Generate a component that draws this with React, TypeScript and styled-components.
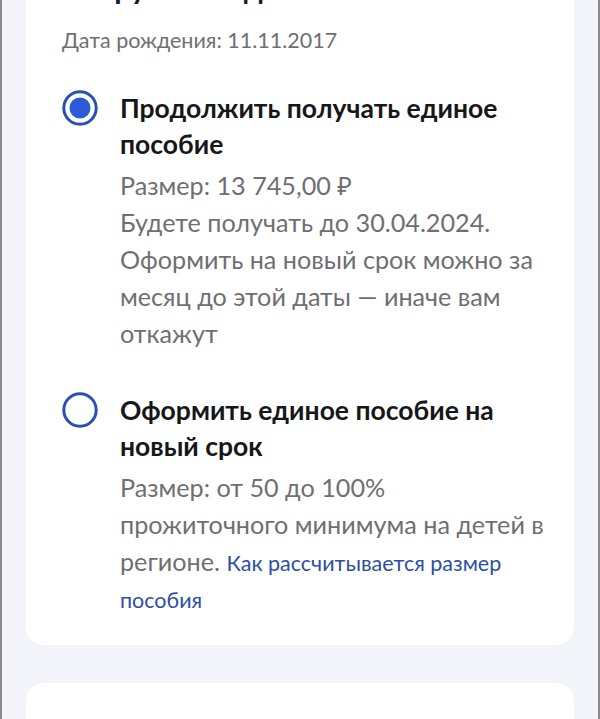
import React from 'react';
import styled, { createGlobalStyle } from 'styled-components';

const GlobalStyle = createGlobalStyle`
  html, body {
    margin: 0;
    padding: 0;
    background: #f3f5fa;
    font-family: Lato, "Noto Sans", sans-serif;
    -webkit-font-smoothing: antialiased;
  }
`;

const Frame = styled.div`
  box-sizing: border-box;
  width: 600px;
  height: 719px;
  overflow: hidden;
  background: #f3f5fa;
  border-left: 2px solid #8a8a8a;
  border-right: 2px solid #8a8a8a;
`;

const Scroller = styled.div`
  display: flex;
  flex-direction: column;
  gap: 38px;
  padding: 0 24px;
  margin-top: -31px;
`;

const Card = styled.section<{ $min?: number }>`
  background: #ffffff;
  border-radius: 18px;
  padding: 0 24px 28px 36px;
  min-height: ${({ $min }) => ($min ? `${$min}px` : 'auto')};
`;

const ChildName = styled.h2`
  margin: 0;
  font-size: 30px;
  line-height: 36px;
  font-weight: 700;
  color: #0b1f33;
`;

const BirthDate = styled.div`
  margin-top: 20px;
  font-size: 21.5px;
  line-height: 30px;
  color: #6f6f73;
`;

const Options = styled.div`
  display: flex;
  flex-direction: column;
  gap: 40px;
  margin-top: 35px;
`;

const OptionRow = styled.label`
  display: flex;
  gap: 22px;
  align-items: flex-start;
  cursor: pointer;
`;

const RadioWrap = styled.span`
  flex: none;
  width: 36px;
  height: 36px;
`;

const OptionBody = styled.div`
  display: flex;
  flex-direction: column;
  gap: 5px;
`;

const OptionTitle = styled.div`
  font-size: 26.5px;
  line-height: 36px;
  font-weight: 700;
  color: #17171a;
`;

const OptionText = styled.div`
  font-size: 25.2px;
  line-height: 37px;
  color: #6f6f73;
`;

const Link = styled.a`
  font-size: 21.5px;
  line-height: 1;
  color: #2b4fa5;
  text-decoration: none;
`;

function Radio({ checked }: { checked: boolean }) {
  return (
    <RadioWrap>
      <svg width="36" height="36" viewBox="0 0 36 36">
        <circle cx="18" cy="18" r="16.2" fill="none" stroke="#2a4fb8" strokeWidth="3" />
        {checked && <circle cx="18" cy="18" r="10.5" fill="#2d59d6" />}
      </svg>
    </RadioWrap>
  );
}

export default function App() {
  return (
    <>
      <GlobalStyle />
      <Frame>
        <Scroller>
          <Card>
            <ChildName>Лаврусов Медина</ChildName>
            <BirthDate>Дата рождения: 11.11.2017</BirthDate>
            <Options>
              <OptionRow>
                <Radio checked />
                <OptionBody>
                  <OptionTitle>Продолжить получать единое пособие</OptionTitle>
                  <OptionText>
                    Размер: 13 745,00 ₽
                    <br />
                    Будете получать до 30.04.2024.
                    <br />
                    Оформить на новый срок можно за месяц до этой даты — иначе вам откажут
                  </OptionText>
                </OptionBody>
              </OptionRow>
              <OptionRow>
                <Radio checked={false} />
                <OptionBody>
                  <OptionTitle>Оформить единое пособие на новый срок</OptionTitle>
                  <OptionText>
                    Размер: от 50 до 100%
                    <br />
                    прожиточного минимума на детей в регионе.{' '}
                    <Link href="#">Как рассчитывается размер пособия</Link>
                  </OptionText>
                </OptionBody>
              </OptionRow>
            </Options>
          </Card>
          <Card $min={120} />
        </Scroller>
      </Frame>
    </>
  );
}
